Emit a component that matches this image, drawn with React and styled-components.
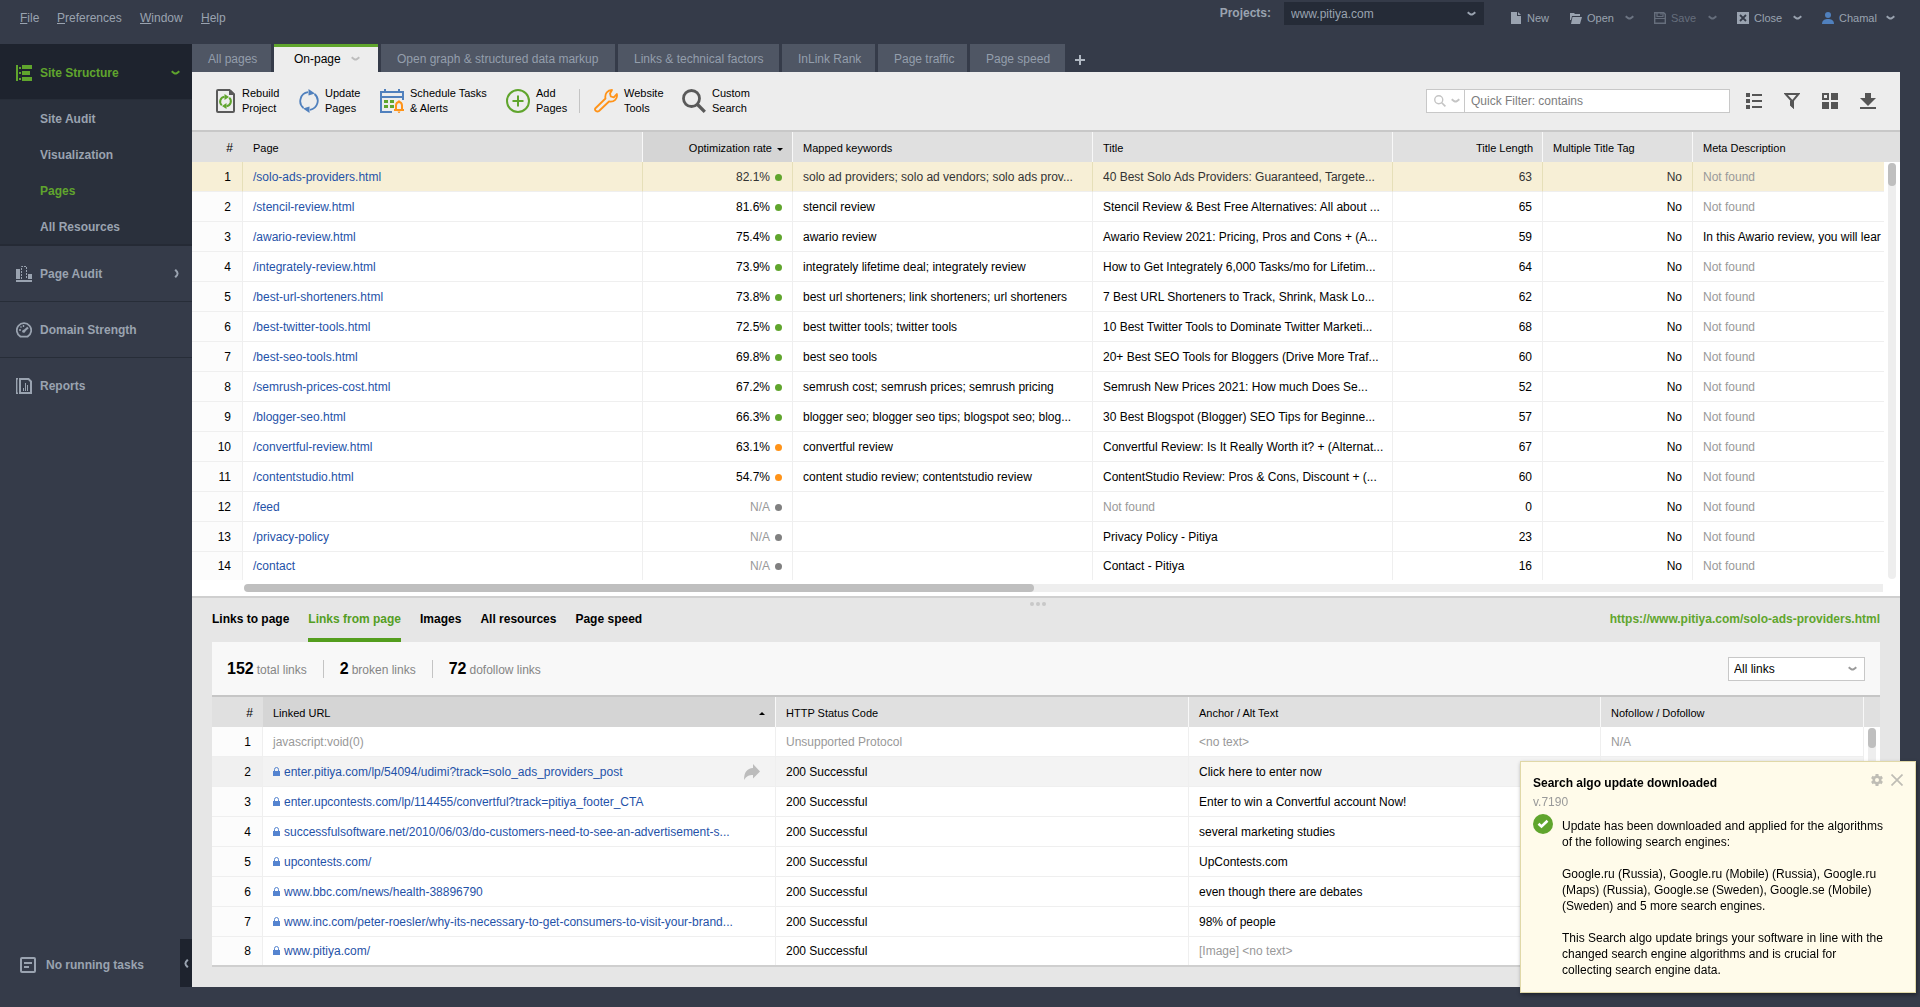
import React from 'react'

import styled, { createGlobalStyle } from 'styled-components'

const pages = [
    { url: '/solo-ads-providers.html', rate: '82.1%', level: 'good', keywords: 'solo ad providers; solo ad vendors; solo ads prov...', title: '40 Best Solo Ads Providers: Guaranteed, Targete...', length: 63 },
    { url: '/stencil-review.html', rate: '81.6%', level: 'good', keywords: 'stencil review', title: 'Stencil Review & Best Free Alternatives: All about ...', length: 65 },
    { url: '/awario-review.html', rate: '75.4%', level: 'good', keywords: 'awario review', title: 'Awario Review 2021: Pricing, Pros and Cons + (A...', length: 59, meta: 'In this Awario review, you will lear' },
    { url: '/integrately-review.html', rate: '73.9%', level: 'good', keywords: 'integrately lifetime deal; integrately review', title: 'How to Get Integrately 6,000 Tasks/mo for Lifetim...', length: 64 },
    { url: '/best-url-shorteners.html', rate: '73.8%', level: 'good', keywords: 'best url shorteners; link shorteners; url shorteners', title: '7 Best URL Shorteners to Track, Shrink, Mask Lo...', length: 62 },
    { url: '/best-twitter-tools.html', rate: '72.5%', level: 'good', keywords: 'best twitter tools; twitter tools', title: '10 Best Twitter Tools to Dominate Twitter Marketi...', length: 68 },
    { url: '/best-seo-tools.html', rate: '69.8%', level: 'good', keywords: 'best seo tools', title: '20+ Best SEO Tools for Bloggers (Drive More Traf...', length: 60 },
    { url: '/semrush-prices-cost.html', rate: '67.2%', level: 'good', keywords: 'semrush cost; semrush prices; semrush pricing', title: 'Semrush New Prices 2021: How much Does Se...', length: 52 },
    { url: '/blogger-seo.html', rate: '66.3%', level: 'good', keywords: 'blogger seo; blogger seo tips; blogspot seo; blog...', title: '30 Best Blogspot (Blogger) SEO Tips for Beginne...', length: 57 },
    { url: '/convertful-review.html', rate: '63.1%', level: 'fair', keywords: 'convertful review', title: 'Convertful Review: Is It Really Worth it? + (Alternat...', length: 67 },
    { url: '/contentstudio.html', rate: '54.7%', level: 'fair', keywords: 'content studio review; contentstudio review', title: 'ContentStudio Review: Pros & Cons, Discount + (...', length: 60 },
    { url: '/feed', rate: 'N/A', level: 'none', keywords: '', title: '', length: 0 },
    { url: '/privacy-policy', rate: 'N/A', level: 'none', keywords: '', title: 'Privacy Policy - Pitiya', length: 23 },
    { url: '/contact', rate: 'N/A', level: 'none', keywords: '', title: 'Contact - Pitiya', length: 16 },
]

const links = [
    { url: 'javascript:void(0)', status: 'Unsupported Protocol', anchor: '<no text>', follow: 'N/A', muted: true },
    { url: 'enter.pitiya.com/lp/54094/udimi?track=solo_ads_providers_post', status: '200 Successful', anchor: 'Click here to enter now', hovered: true },
    { url: 'enter.upcontests.com/lp/114455/convertful?track=pitiya_footer_CTA', status: '200 Successful', anchor: 'Enter to win a Convertful account Now!' },
    { url: 'successfulsoftware.net/2010/06/03/do-customers-need-to-see-an-advertisement-s...', status: '200 Successful', anchor: 'several marketing studies' },
    { url: 'upcontests.com/', status: '200 Successful', anchor: 'UpContests.com' },
    { url: 'www.bbc.com/news/health-38896790', status: '200 Successful', anchor: 'even though there are debates' },
    { url: 'www.inc.com/peter-roesler/why-its-necessary-to-get-consumers-to-visit-your-brand...', status: '200 Successful', anchor: '98% of people' },
    { url: 'www.pitiya.com/', status: '200 Successful', anchor: '[Image] <no text>', noText: true },
]

const tabs = [
    { label: 'All pages', width: 79 },
    { label: 'On-page', width: 104, active: true },
    { label: 'Open graph & structured data markup', width: 234 },
    { label: 'Links & technical factors', width: 161 },
    { label: 'InLink Rank', width: 93 },
    { label: 'Page traffic', width: 89 },
    { label: 'Page speed', width: 95 },
]

const dots = { good: '#60a52d', fair: '#ff9318', none: '#808080' }

/* icons */

function Chevron({ color = 'currentColor' }) {
    return (
        <svg width="9" height="6" viewBox="0 0 9 6" fill="none" stroke={color} strokeWidth="2" aria-hidden="true">
            <path d="M.7 1.2 3.2 3.2Q4.5 4 5.8 3.2L8.3 1.2"/>
        </svg>
    )
}

function SideChevron({ flip }) {
    return (
        <svg width="6" height="9" viewBox="0 0 6 9" fill="none" stroke="currentColor" strokeWidth="2" aria-hidden="true">
            <path d={flip ? 'M4.8.7 2.8 3.2Q2 4.5 2.8 5.8L4.8 8.3' : 'M1.2.7 3.2 3.2Q4 4.5 3.2 5.8L1.2 8.3'}/>
        </svg>
    )
}

function StructureIcon() {
    return (
        <svg width="16" height="16" viewBox="0 0 16 16" fill="currentColor" aria-hidden="true">
            <path d="M0 0h2v16H0zM3 2h2v2H3zM6 0h10v4H6zM3 7h2v2H3zM6 6h8v4H6zM3 13h2v2H3zM6 12h10v4H6z"/>
        </svg>
    )
}

function AuditIcon() {
    return (
        <svg width="16" height="16" viewBox="0 0 16 16" fill="currentColor" aria-hidden="true">
            <path d="M0 3h4v10H0zM12 8h4v5h-4zM0 14h16v2H0z"/>
            <path d="M5.5 13V.5h5V13" fill="none" stroke="currentColor" strokeDasharray="2 1"/>
        </svg>
    )
}

function GaugeIcon() {
    return (
        <svg width="16" height="16" viewBox="0 0 16 16" fill="none" stroke="currentColor" aria-hidden="true">
            <path d="M4.5 14.6A7.2 7.2 0 1 1 11.5 14.6z" strokeWidth="1.8"/>
            <path d="M7.5 9.5 12 5.5" strokeWidth="2.2"/>
            <circle cx="7.7" cy="9.3" r="1.5" fill="currentColor" stroke="none"/>
            <path d="M3 8h2M7.5 3v2M4.5 4.5l1 1" strokeWidth="1.4"/>
        </svg>
    )
}

function ReportsIcon() {
    return (
        <svg width="16" height="16" viewBox="0 0 16 16" fill="none" stroke="currentColor" aria-hidden="true">
            <path d="M2 .7H.7v14.6H2" strokeWidth="1.4"/>
            <path d="M4 1h8.5L15 3.5V15H4z" strokeWidth="2"/>
            <path d="M7.5 13v-3M9.5 13V5M11.5 13V7"/>
        </svg>
    )
}

function TasksIcon() {
    return (
        <svg width="16" height="16" viewBox="0 0 16 16" fill="none" stroke="currentColor" strokeWidth="2" aria-hidden="true">
            <rect x="1" y="1" width="14" height="14" rx="1"/>
            <path d="M4 6h8M4 10h5"/>
        </svg>
    )
}

function FileIcon() {
    return (
        <svg width="11" height="12" viewBox="0 0 11 12" fill="currentColor" aria-hidden="true">
            <path d="M0 0h6v4h4v8H0z"/>
            <path d="M7 0 10 3H7z"/>
        </svg>
    )
}

function FolderIcon() {
    return (
        <svg width="12" height="12" viewBox="0 0 12 12" fill="currentColor" aria-hidden="true">
            <path d="M0 1h4l1 1h5v2H2L1 8H0z"/>
            <path d="M2.5 5H12l-2 7H1z"/>
        </svg>
    )
}

function SaveIcon() {
    return (
        <svg width="12" height="12" viewBox="0 0 12 12" fill="none" stroke="currentColor" aria-hidden="true">
            <path d="M.7.7h9l1.6 1.6v9H.7z" strokeWidth="1.4"/>
            <path d="M3 .5v4h6v-4M.5 6.5h11" strokeWidth="1.2"/>
            <path d="M7 1v2"/>
        </svg>
    )
}

function CloseBoxIcon() {
    return (
        <svg width="12" height="12" viewBox="0 0 12 12" aria-hidden="true">
            <path d="M0 0h12v12H0z" fill="currentColor"/>
            <path d="m3 3 6 6M9 3 3 9" stroke="#353b49" strokeWidth="1.8"/>
        </svg>
    )
}

function UserIcon() {
    return (
        <svg width="12" height="12" viewBox="0 0 12 12" fill="#5080bd" aria-hidden="true">
            <circle cx="6" cy="3" r="3"/>
            <path d="M0 12c0-4 3-5 6-5s6 1 6 5z"/>
        </svg>
    )
}

function RebuildIcon() {
    return (
        <svg width="20" height="24" viewBox="0 0 20 24" fill="none" aria-hidden="true">
            <path d="M1 2q0-1 1-1h11.500L18 5.500V22q0 1-1 1H2q-1 0-1-1z" stroke="#5a5a5a" strokeWidth="2"/>
            <path d="M13 1v5h6V5l-4-4z" fill="#5a5a5a"/>
            <path d="M5.800 16.200A4.800 4.800 0 0 1 8.500 7.800M13.200 8.800A4.800 4.800 0 0 1 10.500 17.200" stroke="#60a52d" strokeWidth="2"/>
            <path d="M8.500 5 13 8l-4.500 3zM10.500 14 6 17l4.500 3z" fill="#60a52d"/>
        </svg>
    )
}

function UpdateIcon() {
    return (
        <svg width="20" height="24" viewBox="0 0 20 24" fill="none" aria-hidden="true">
            <path d="M4.500 19A9 9 0 0 1 9 3.200M15.500 5A9 9 0 0 1 11 20.800" stroke="#5080bd" strokeWidth="1.800"/>
            <path d="M9.500 0 16 4.500 9.500 6.500zM10.500 24 4 19.500l6.500-2z" fill="#5080bd"/>
        </svg>
    )
}

function ScheduleIcon() {
    return (
        <svg width="24" height="24" viewBox="0 0 24 24" fill="none" aria-hidden="true">
            <path d="M23 11V3H1v20h11M1 8h22M5 0v4M19 0v4" stroke="#5080bd" strokeWidth="2"/>
            <path d="M4 11h4v3H4zM10 11h4v3h-4zM4 16h4v3H4zM10 16h4v3h-4z" fill="#60a52d"/>
            <path d="M14 21h10M16 21v-4.500a3 3.500 0 0 1 6 0V21" stroke="#ff9318" strokeWidth="2"/>
            <path d="M18 11.500h2v2h-2zM17.500 22.500h3L19.500 24h-1z" fill="#ff9318"/>
        </svg>
    )
}

function AddIcon() {
    return (
        <svg width="24" height="24" viewBox="0 0 24 24" fill="none" stroke="#60a52d" strokeWidth="2" aria-hidden="true">
            <circle cx="12" cy="12" r="11"/>
            <path d="M6.500 12h11M12 6.500v11"/>
        </svg>
    )
}

function WrenchIcon() {
    return (
        <svg width="24" height="24" viewBox="0 0 24 24" fill="none" stroke="#ff9318" strokeWidth="1.800" strokeLinejoin="round" aria-hidden="true">
            <path d="M11.500 9.500C10.500 5 13.500 1 18 1L16 4.500l.8 3 3 .8L22.800 5C24 9.500 20 13.500 15 12.500L5 22q-1.500 1-3 0T1.200 19.500z"/>
        </svg>
    )
}

function SearchIcon({ size = 24, color = '#5a5a5a' }) {
    return (
        <svg width={size} height={size} viewBox="0 0 24 24" fill="none" stroke={color} aria-hidden="true">
            <circle cx="9.5" cy="9.5" r="8" strokeWidth="2.8"/>
            <path d="m15.500 15.500 7.300 7.300" strokeWidth="3.300"/>
        </svg>
    )
}

function ListIcon() {
    return (
        <svg width="16" height="16" viewBox="0 0 16 16" fill="currentColor" aria-hidden="true">
            <path d="M0 0h4v4H0zM6 1h10v2H6zM0 6h4v4H0zM6 7h10v2H6zM0 12h4v4H0zM6 13h10v2H6z"/>
        </svg>
    )
}

function FunnelIcon() {
    return (
        <svg width="16" height="16" viewBox="0 0 16 16" aria-hidden="true">
            <path d="M1.5 1h13L9 7.500v6L7.500 12V7.500z" fill="none" stroke="currentColor" strokeWidth="2"/>
            <path d="M6 8h4v8l-4-3.500z" fill="currentColor"/>
        </svg>
    )
}

function GridIcon() {
    return (
        <svg width="16" height="16" viewBox="0 0 16 16" fill="currentColor" aria-hidden="true">
            <path fillRule="evenodd" d="M0 0h7v7H0zM2 2v3h3V2zM9 0h7v7H9zM0 9h7v7H0zM9 9h7v7H9z"/>
        </svg>
    )
}

function DownloadIcon() {
    return (
        <svg width="16" height="16" viewBox="0 0 16 16" fill="currentColor" aria-hidden="true">
            <path d="M5 0h6v5h5l-8 8-8-8h5zM0 14h16v2H0z"/>
        </svg>
    )
}

function LockIcon() {
    return (
        <svg width="7" height="10" viewBox="0 0 7 10" aria-hidden="true">
            <path d="M1.500 5V2.500a2 2 0 0 1 4 0V5" fill="none" stroke="#5584d0"/>
            <path d="M0 4h7v5H0z" fill="#5584d0"/>
        </svg>
    )
}

function ShareIcon() {
    return (
        <svg width="16" height="16" viewBox="0 0 16 16" fill="#bcbcbc" aria-hidden="true">
            <path d="M0 16C0 8 3 4.500 9 4V0l7 7.500-7 7V11C5 11 2.500 12 0 16z"/>
        </svg>
    )
}

function GearIcon() {
    return (
        <svg width="12" height="12" viewBox="0 0 12 12" fill="none" stroke="#bfbdb5" aria-hidden="true">
            <circle cx="6" cy="6" r="3.300" strokeWidth="2.600"/>
            <path d="M6 0v2M6 10v2M.8 3l1.700 1M9.500 8l1.700 1M.8 9l1.700-1M9.500 4l1.700-1" strokeWidth="3"/>
        </svg>
    )
}

function CrossIcon() {
    return (
        <svg width="12" height="12" viewBox="0 0 12 12" stroke="#bfbdb5" strokeWidth="1.700" aria-hidden="true">
            <path d="m.5.500 11 11M11.500.500l-11 11"/>
        </svg>
    )
}

function CheckIcon() {
    return (
        <svg width="20" height="20" viewBox="0 0 20 20" fill="none" aria-hidden="true">
            <circle cx="10" cy="10" r="10" fill="#60a52d"/>
            <path d="m5.500 9.700 3 2.800 6-5.700" stroke="#fff" strokeWidth="2.600"/>
        </svg>
    )
}

/* sections */

function TopBar() {
    return (
        <Top>
            <MenuBar>
                <MenuItem width={37}><u>F</u>ile</MenuItem>
                <MenuItem width={83}><u>P</u>references</MenuItem>
                <MenuItem width={61}><u>W</u>indow</MenuItem>
                <MenuItem width={40}><u>H</u>elp</MenuItem>
            </MenuBar>
            <TopRight>
                <ProjectLabel htmlFor="project">Projects:</ProjectLabel>
                <SelectBox>
                    <ProjectSelect id="project" defaultValue="www.pitiya.com">
                        <option>www.pitiya.com</option>
                    </ProjectSelect>
                    <Chevron/>
                </SelectBox>
                <FileActions>
                    <FileAction width={59}><FileIcon/>New</FileAction>
                    <FileAction width={84}><FolderIcon/>Open<Chevron color="#6d7583"/></FileAction>
                    <FileAction width={83} disabled><SaveIcon/>Save<Chevron/></FileAction>
                    <FileAction width={85}><CloseBoxIcon/>Close<Chevron/></FileAction>
                    <FileAction width={93}><UserIcon/>Chamal<Chevron/></FileAction>
                </FileActions>
            </TopRight>
        </Top>
    )
}

function Sidebar() {
    return (
        <Side>
            <nav>
                <NavItem $active><StructureIcon/><span>Site Structure</span><Chevron/></NavItem>
                <SubNav>
                    <SubItem href="#audit">Site Audit</SubItem>
                    <SubItem href="#visualization">Visualization</SubItem>
                    <SubItem href="#pages" $active>Pages</SubItem>
                    <SubItem href="#resources">All Resources</SubItem>
                </SubNav>
                <NavItem><AuditIcon/><span>Page Audit</span><SideChevron/></NavItem>
                <NavItem><GaugeIcon/><span>Domain Strength</span></NavItem>
                <NavItem $last><ReportsIcon/><span>Reports</span></NavItem>
            </nav>
            <SideFooter>
                <Tasks><TasksIcon/>No running tasks</Tasks>
                <Collapse aria-label="Collapse sidebar"><SideChevron flip/></Collapse>
            </SideFooter>
        </Side>
    )
}

function Tools() {
    return (
        <Toolbar>
            <ToolButton width={83}><RebuildIcon/><span>Rebuild<br/>Project</span></ToolButton>
            <ToolButton width={81}><UpdateIcon/><span>Update<br/>Pages</span></ToolButton>
            <ToolButton width={126}><ScheduleIcon/><span>Schedule Tasks<br/>&amp; Alerts</span></ToolButton>
            <ToolButton width={73}><AddIcon/><span>Add<br/>Pages</span></ToolButton>
            <ToolDivider/>
            <ToolButton width={88}><WrenchIcon/><span>Website<br/>Tools</span></ToolButton>
            <ToolButton width={80}><SearchIcon/><span>Custom<br/>Search</span></ToolButton>
            <ToolsRight>
                <Filter>
                    <FilterMode aria-label="Filter mode"><SearchIcon size={12} color="#c4c4c4"/><Chevron color="#c4c4c4"/></FilterMode>
                    <FilterInput aria-label="Quick filter" placeholder="Quick Filter: contains"/>
                </Filter>
                <IconButton aria-label="List"><ListIcon/></IconButton>
                <IconButton aria-label="Filter"><FunnelIcon/></IconButton>
                <IconButton aria-label="Columns"><GridIcon/></IconButton>
                <IconButton aria-label="Download"><DownloadIcon/></IconButton>
            </ToolsRight>
        </Toolbar>
    )
}

function PagesTable() {
    return (
        <Table>
            <colgroup>
                <Col width={51}/>
                <Col width={400}/>
                <Col width={150}/>
                <Col width={300}/>
                <Col width={300}/>
                <Col width={150}/>
                <Col width={150}/>
                <col/>
                <Col width={16}/>
            </colgroup>
            <thead>
                <tr>
                    <NumHead>#</NumHead>
                    <Th>Page</Th>
                    <Th $right $sorted>Optimization rate<SortArrow/></Th>
                    <Th>Mapped keywords</Th>
                    <Th>Title</Th>
                    <Th $right>Title Length</Th>
                    <Th>Multiple Title Tag</Th>
                    <Th $plain>Meta Description</Th>
                    <Th $plain/>
                </tr>
            </thead>
            <tbody>
                {pages.map((page, i) => (
                    <Row key={page.url} $selected={i === 0}>
                        <NumCell>{i + 1}</NumCell>
                        <Td><PageLink href="#page">{page.url}</PageLink></Td>
                        <Td $right $muted={page.level === 'none'}>{page.rate}<Dot color={dots[page.level]}/></Td>
                        <Td>{page.keywords}</Td>
                        <Td $muted={!page.title}>{page.title || 'Not found'}</Td>
                        <Td $right>{page.length}</Td>
                        <Td $right>No</Td>
                        <Td $last $muted={!page.meta}>{page.meta || 'Not found'}</Td>
                        {i === 0 &&
                            <ScrollCell rowSpan={pages.length}><Track><Thumb $length={23}/></Track></ScrollCell>
                        }
                    </Row>
                ))}
            </tbody>
        </Table>
    )
}

function LinksTable() {
    return (
        <Table>
            <colgroup>
                <Col width={51}/>
                <Col width={513}/>
                <Col width={413}/>
                <Col width={412}/>
                <col/>
                <Col width={16}/>
            </colgroup>
            <thead>
                <tr>
                    <NumHead>#</NumHead>
                    <Th $sorted><Spread>Linked URL<SortArrow $up/></Spread></Th>
                    <Th>HTTP Status Code</Th>
                    <Th>Anchor / Alt Text</Th>
                    <Th>Nofollow / Dofollow</Th>
                    <Th $plain/>
                </tr>
            </thead>
            <tbody>
                {links.map((link, i) => (
                    <Row key={link.url} $hovered={link.hovered}>
                        <NumCell>{i + 1}</NumCell>
                        <Td $muted={link.muted}>
                            {link.muted
                                ? link.url
                                : <Spread $inset><PageLink href="#link"><LockIcon/>{link.url}</PageLink>{link.hovered && <ShareIcon/>}</Spread>
                            }
                        </Td>
                        <Td $muted={link.muted}>{link.status}</Td>
                        <Td $muted={link.muted || link.noText}>{link.anchor}</Td>
                        <Td $muted={link.muted}>{link.follow}</Td>
                        {i === 0 &&
                            <ScrollCell rowSpan={links.length}><Track><Thumb $length={20}/></Track></ScrollCell>
                        }
                    </Row>
                ))}
            </tbody>
        </Table>
    )
}

function Details() {
    return (
        <DetailsWrap>
            <Grip><i/><i/><i/></Grip>
            <DetailTabs>
                <DetailTab>Links to page</DetailTab>
                <DetailTab $active>Links from page</DetailTab>
                <DetailTab>Images</DetailTab>
                <DetailTab>All resources</DetailTab>
                <DetailTab>Page speed</DetailTab>
                <PageUrl href="https://www.pitiya.com/solo-ads-providers.html">https://www.pitiya.com/solo-ads-providers.html</PageUrl>
            </DetailTabs>
            <Panel>
                <Summary>
                    <Stat><b>152</b>total links</Stat>
                    <Stat><b>2</b>broken links</Stat>
                    <Stat><b>72</b>dofollow links</Stat>
                    <SelectBox $push>
                        <LinksSelect aria-label="Show links" defaultValue="All links">
                            <option>All links</option>
                        </LinksSelect>
                        <Chevron color="#9a9a9a"/>
                    </SelectBox>
                </Summary>
                <LinksTable/>
            </Panel>
        </DetailsWrap>
    )
}

function UpdateNotice() {
    return (
        <Notice role="status">
            <NoticeHead>
                <h2>Search algo update downloaded</h2>
                <NoticeButton aria-label="Settings"><GearIcon/></NoticeButton>
                <NoticeButton aria-label="Close"><CrossIcon/></NoticeButton>
            </NoticeHead>
            <Version>v.7190</Version>
            <NoticeBody>
                <CheckIcon/>
                <div>
                    <p>Update has been downloaded and applied for the algorithms<br/>of the following search engines:</p>
                    <p>Google.ru (Russia), Google.ru (Mobile) (Russia), Google.ru<br/>(Maps) (Russia), Google.se (Sweden), Google.se (Mobile)<br/>(Sweden) and 5 more search engines.</p>
                    <p>This Search algo update brings your software in line with the<br/>changed search engine algorithms and is crucial for<br/>collecting search engine data.</p>
                </div>
            </NoticeBody>
        </Notice>
    )
}

function App() {
    return (
        <Shell>
            <GlobalStyle/>
            <TopBar/>
            <Body>
                <Sidebar/>
                <Main>
                    <Tabs>
                        {tabs.map(tab => (
                            <Tab key={tab.label} width={tab.width} $active={tab.active}>
                                {tab.label}
                                {tab.active && <Chevron color="#bdbdbd"/>}
                            </Tab>
                        ))}
                        <AddTab aria-label="Add tab">
                            <svg width="10" height="10" viewBox="0 0 10 10" stroke="currentColor" strokeWidth="2"><path d="M0 5h10M5 0v10"/></svg>
                        </AddTab>
                    </Tabs>
                    <Tools/>
                    <PagesTable/>
                    <HScroll><HThumb/></HScroll>
                    <Details/>
                </Main>
            </Body>
            <UpdateNotice/>
        </Shell>
    )
}

export default App

const GlobalStyle = createGlobalStyle`
    * {
        box-sizing: border-box;
    }
    body {
        margin: 0;
        background: #353b49;
        font-family: "Liberation Sans", Arial, sans-serif;
        font-size: 12px;
        color: #000;
    }
    button, input, select {
        font: inherit;
        color: inherit;
        border: 0;
        padding: 0;
        background: none;
        text-align: left;
    }
    svg {
        display: block;
        flex-shrink: 0;
    }
    h2, p {
        margin: 0;
        font-size: 12px;
    }
    a {
        text-decoration: none;
    }
`

const Shell = styled.div`
    min-height: 100vh;
    display: flex;
    flex-direction: column;
    padding-bottom: 20px;
`

const Top = styled.header`
    height: 44px;
    display: flex;
    justify-content: space-between;
    color: #9aa3b0;
`

const MenuBar = styled.nav`
    display: flex;
    height: 36px;
    padding-left: 20px;
`

const MenuItem = styled.button`
    width: ${props => props.width}px;
`

const TopRight = styled.div`
    display: flex;
    align-items: flex-start;
    padding-top: 2px;
`

const ProjectLabel = styled.label`
    font-weight: bold;
    line-height: 23px;
    margin-right: 13px;
`

const SelectBox = styled.div`
    position: relative;
    margin-left: ${props => props.$push ? 'auto' : 0};
    svg {
        position: absolute;
        right: 8px;
        top: 9px;
        pointer-events: none;
    }
`

const ProjectSelect = styled.select`
    appearance: none;
    width: 200px;
    height: 23px;
    padding-left: 7px;
    background: #252b37;
`

const FileActions = styled.div`
    display: flex;
    margin: 6px 5px 0 27px;
`

const FileAction = styled.button`
    width: ${props => props.width}px;
    display: flex;
    align-items: center;
    gap: 5px;
    height: 20px;
    font-size: 11px;
    color: ${props => props.disabled ? '#666e7c' : 'inherit'};
    svg:last-child:not(:first-child) {
        margin-left: auto;
        margin-right: 20px;
    }
`

const Body = styled.div`
    flex: 1;
    display: flex;
`

const Side = styled.aside`
    width: 192px;
    flex-shrink: 0;
    display: flex;
    flex-direction: column;
    justify-content: space-between;
    color: #9aa3b0;
    font-weight: bold;
`

const NavItem = styled.button`
    width: 100%;
    height: 56px;
    display: flex;
    align-items: center;
    gap: 8px;
    padding: ${props => props.$active ? '2px 12px 0 16px' : '0 12px 0 16px'};
    font-weight: bold;
    color: ${props => props.$active ? '#60a52d' : 'inherit'};
    background: ${props => props.$active ? '#1e232e' : 'transparent'};
    border-bottom: 1px solid ${props => props.$last ? 'transparent' : '#272d38'};
    span {
        flex: 1;
    }
`

const SubNav = styled.div`
    background: #2a303c;
    border-bottom: 2px solid #252a35;
    height: 146px;
    padding-top: 1px;
`

const SubItem = styled.a`
    display: block;
    line-height: 36px;
    padding-left: 40px;
    color: ${props => props.$active ? '#60a52d' : '#9aa3b0'};
`

const SideFooter = styled.div`
    display: flex;
    align-items: flex-end;
    justify-content: space-between;
`

const Tasks = styled.div`
    display: flex;
    align-items: center;
    gap: 10px;
    height: 44px;
    padding-left: 20px;
`

const Collapse = styled.button`
    width: 12px;
    height: 48px;
    padding-left: 3px;
    background: #1e232e;
`

const Main = styled.main`
    flex: 1;
    min-width: 0;
    margin-right: 20px;
    display: flex;
    flex-direction: column;
`

const Tabs = styled.div`
    display: flex;
    gap: 3px;
    height: 28px;
`

const Tab = styled.button`
    width: ${props => props.width}px;
    display: flex;
    align-items: center;
    gap: 10px;
    white-space: nowrap;
    padding-left: ${props => props.$active ? 20 : 16}px;
    padding-top: 2px;
    color: ${props => props.$active ? '#000' : '#949eac'};
    background: ${props => props.$active ? '#ededed' : '#4f5664'};
    box-shadow: ${props => props.$active ? 'inset 0 3px #60a52d' : 'none'};
`

const AddTab = styled.button`
    padding: 3px 7px 0;
    color: #b0b8c2;
`

const Toolbar = styled.div`
    display: flex;
    align-items: center;
    height: 60px;
    padding: 0 24px;
    background: #ededed;
    border-bottom: 2px solid #c8c8c8;
`

const ToolButton = styled.button`
    width: ${props => props.width}px;
    display: flex;
    gap: 6px;
    font-size: 11px;
    line-height: 15px;
    white-space: nowrap;
    svg {
        margin-top: 3px;
    }
`

const ToolDivider = styled.div`
    width: 1px;
    height: 24px;
    margin-right: 14px;
    background: #c4c4c4;
`

const ToolsRight = styled.div`
    margin-left: auto;
    display: flex;
    align-items: center;
    gap: 22px;
`

const Filter = styled.div`
    display: flex;
    width: 304px;
    height: 24px;
    margin-right: -6px;
    background: #fff;
    border: 1px solid #c8c8c8;
`

const FilterMode = styled.button`
    width: 38px;
    display: flex;
    align-items: center;
    gap: 5px;
    padding-left: 7px;
    border-right: 1px solid #c8c8c8;
`

const FilterInput = styled.input`
    flex: 1;
    padding-left: 6px;
    &::placeholder {
        color: #7d7d7d;
    }
`

const IconButton = styled.button`
    color: #555;
`

const Table = styled.table`
    width: 100%;
    table-layout: fixed;
    border-collapse: separate;
    border-spacing: 0;
    background: #fff;
`

const Col = styled.col`
    width: ${props => props.width}px;
`

const Th = styled.th`
    height: 30px;
    padding: 2px 10px 0;
    font-size: 11px;
    font-weight: normal;
    white-space: nowrap;
    text-align: ${props => props.$right ? 'right' : 'left'};
    padding-right: ${props => props.$right ? 9 : 10}px;
    background: ${props => props.$sorted ? '#d5d5d5' : '#e0e0e0'};
    border-right: ${props => props.$plain ? 0 : '1px solid #f8f8f8'};
`

const NumHead = styled(Th)`
    padding-right: 9px;
    font-size: 12px;
    text-align: right;
    border-right-color: #e0e0e0;
`

const SortArrow = styled.span`
    display: inline-block;
    vertical-align: middle;
    margin-left: 5px;
    border: 3px solid transparent;
    border-${props => props.$up ? 'bottom' : 'top'}-color: #000;
    border-${props => props.$up ? 'top' : 'bottom'}-width: 0;
`

const Td = styled.td`
    height: 30px;
    padding: 0 10px;
    overflow: hidden;
    white-space: nowrap;
    text-align: ${props => props.$right ? 'right' : 'left'};
    padding-right: ${props => props.$last ? 0 : 10}px;
    color: ${props => props.$muted ? '#999' : 'inherit'};
    border-bottom: 1px solid #efefef;
    border-right: ${props => props.$last ? 0 : '1px solid #efefef'};
`

const NumCell = styled(Td)`
    text-align: right;
    padding-right: 11px;
    background: #fcfcfc;
`

const Row = styled.tr`
    background: ${props => props.$selected ? '#f7efd6' : props.$hovered ? '#f3f3f3' : '#fff'};
    color: ${props => props.$selected ? '#333' : '#000'};
    ${Td} {
        border-right-color: ${props => props.$selected ? '#e6dfb9' : '#efefef'};
    }
    ${NumCell} {
        color: #000;
        background: ${props => props.$selected ? '#f7efd6' : props.$hovered ? '#f0f0f0' : '#fcfcfc'};
    }
    &:last-child ${Td} {
        height: 28px;
        border-bottom: 0;
    }
`

const PageLink = styled.a`
    display: inline-flex;
    align-items: center;
    gap: 4px;
    color: #1f52a8;
`

const Dot = styled.span`
    display: inline-block;
    width: 7px;
    height: 7px;
    border-radius: 50%;
    margin-left: 5px;
    vertical-align: middle;
    background: ${props => props.color};
`

const Spread = styled.span`
    display: flex;
    align-items: center;
    justify-content: space-between;
    padding-right: ${props => props.$inset ? 5 : 0}px;
`

const ScrollCell = styled.td`
    position: relative;
    padding: 0;
    background: #fff;
`

const Track = styled.div`
    position: absolute;
    top: 1px;
    bottom: 1px;
    left: 4px;
    width: 8px;
    border-radius: 4px;
    background: #eee;
`

const Thumb = styled.div`
    height: ${props => props.$length}px;
    border-radius: 4px;
    background: #bfbfbf;
`

const HScroll = styled.div`
    height: 16px;
    padding: 4px 17px 4px 52px;
    background: linear-gradient(#eee, #eee) no-repeat 56px 4px / calc(100% - 73px) 8px #fff;
`

const HThumb = styled.div`
    width: 48.2%;
    height: 8px;
    border-radius: 4px;
    background: #bfbfbf;
`

const DetailsWrap = styled.section`
    flex: 1;
    padding: 0 20px 20px;
    background: #e6e6e6;
    border-top: 2px solid #cfcfcf;
`

const Grip = styled.div`
    display: flex;
    justify-content: center;
    gap: 2px;
    height: 10px;
    padding: 4px 16px 0 0;
    i {
        width: 4px;
        height: 4px;
        border-radius: 50%;
        background: #c8c8c8;
    }
`

const DetailTabs = styled.div`
    display: flex;
    align-items: stretch;
    gap: 19px;
    height: 34px;
    font-weight: bold;
`

const DetailTab = styled.button`
    font-weight: bold;
    padding-bottom: 12px;
    color: ${props => props.$active ? '#549e24' : '#000'};
    box-shadow: ${props => props.$active ? 'inset 0 -4px #549e1e' : 'none'};
`

const PageUrl = styled.a`
    margin-left: auto;
    line-height: 22px;
    color: #60a52d;
`

const Panel = styled.div`
    background: #f8f8f8;
    border-bottom: 2px solid #cfcfcf;
`

const Summary = styled.div`
    display: flex;
    align-items: center;
    height: 55px;
    padding: 0 15px;
    border-bottom: 2px solid #c6c6c6;
`

const Stat = styled.span`
    display: flex;
    align-items: baseline;
    gap: 3px;
    color: #858585;
    b {
        font-size: 16px;
        color: #000;
    }
    & + & {
        margin-left: 16px;
        padding-left: 16px;
        border-left: 1px solid #c4c4c4;
    }
`

const LinksSelect = styled.select`
    appearance: none;
    width: 137px;
    height: 24px;
    padding-left: 5px;
    background: #fff;
    border: 1px solid #c8c8c8;
`

const Notice = styled.aside`
    position: fixed;
    right: 4px;
    bottom: 14px;
    width: 396px;
    height: 232px;
    padding: 12px;
    background: #fffbea;
    border: 1px solid #e0d8a8;
    box-shadow: 1px 2px 4px rgba(0, 0, 0, 0.4);
`

const NoticeHead = styled.div`
    display: flex;
    gap: 8px;
    h2 {
        flex: 1;
        padding-top: 1px;
        line-height: 16px;
    }
`

const NoticeButton = styled.button`
    height: 12px;
`

const Version = styled.div`
    padding-top: 2px;
    line-height: 18px;
    color: #999;
`

const NoticeBody = styled.div`
    display: flex;
    gap: 9px;
    padding-top: 3px;
    line-height: 16px;
    p {
        margin: 4px 0 12px;
    }
    p + p {
        margin-top: 16px;
    }
`
